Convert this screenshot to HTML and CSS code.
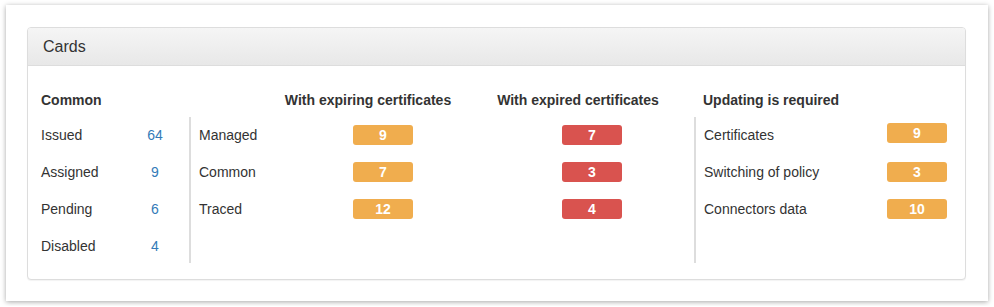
FILE: index.html
```html
<!DOCTYPE html>
<html>
    <head>
        <meta charset="UTF-8">
        <link rel="stylesheet" href="styles.css">
    </head>
    <body>
        <div class="frame">
            <div class="panel">
                <div class="panel-heading">Cards</div>
                <div class="panel-body">
                    <div class="section section-common">
                        <div class="section-head">
                            <span class="title">Common</span>
                        </div>
                        <div class="section-rows">
                            <div class="row"><span class="label">Issued</span><a class="num">64</a></div>
                            <div class="row"><span class="label">Assigned</span><a class="num">9</a></div>
                            <div class="row"><span class="label">Pending</span><a class="num">6</a></div>
                            <div class="row"><span class="label">Disabled</span><a class="num">4</a></div>
                        </div>
                    </div>
                    <div class="section section-certs">
                        <div class="section-head">
                            <span class="title title-expiring">With expiring certificates</span>
                            <span class="title title-expired">With expired certificates</span>
                        </div>
                        <div class="section-rows bordered">
                            <div class="row"><span class="label">Managed</span><span class="badge warning">9</span><span class="badge danger">7</span></div>
                            <div class="row"><span class="label">Common</span><span class="badge warning">7</span><span class="badge danger">3</span></div>
                            <div class="row"><span class="label">Traced</span><span class="badge warning">12</span><span class="badge danger">4</span></div>
                        </div>
                    </div>
                    <div class="section section-update">
                        <div class="section-head">
                            <span class="title">Updating is required</span>
                        </div>
                        <div class="section-rows bordered">
                            <div class="row"><span class="label">Certificates</span><span class="badge warning">9</span></div>
                            <div class="row"><span class="label">Switching of policy</span><span class="badge warning">3</span></div>
                            <div class="row"><span class="label">Connectors data</span><span class="badge warning">10</span></div>
                        </div>
                    </div>
                </div>
            </div>
        </div>
    </body>
</html>
```

FILE: styles.css
```css
body {
    margin: 0;
    background: #fff;
    font-family: "Liberation Sans", Arial, sans-serif;
    font-size: 14px;
    color: #333;
}
.frame {
    margin: 5px 6px;
    width: 982px;
    height: 296px;
    box-sizing: border-box;
    padding: 22px 22px 22px 21px;
    background: #fff;
    box-shadow: 0 1px 5px rgba(0, 0, 0, 0.35);
}
.panel {
    border: 1px solid #ddd;
    border-radius: 4px;
    box-shadow: 0 1px 1px rgba(0, 0, 0, 0.05);
    background: #fff;
}
.panel-heading {
    padding: 10px 15px;
    line-height: 17px;
    font-size: 16px;
    color: #333;
    background: linear-gradient(to bottom, #f5f5f5 0%, #e8e8e8 100%);
    border-bottom: 1px solid #ddd;
    border-radius: 3px 3px 0 0;
}
.panel-body {
    display: flex;
    padding: 24px 13px 16px 13px;
}
.section-head {
    display: flex;
    height: 20px;
    line-height: 20px;
    margin-bottom: 7px;
}
.title {
    font-weight: bold;
    white-space: nowrap;
}
.section-rows {
    height: 146px;
}
.bordered {
    border-left: 2px solid #ddd;
    padding-left: 8px;
}
.row {
    display: flex;
    align-items: center;
    height: 35px;
    padding-bottom: 2px;
}
.label {
    flex: none;
}
.section-common {
    width: 148px;
}
.section-common .label {
    width: 99px;
}
.num {
    width: 30px;
    text-align: center;
    color: #337ab7;
}
.section-certs {
    width: 505px;
}
.title-expiring {
    width: 200px;
    margin-left: 79px;
    text-align: center;
}
.title-expired {
    width: 200px;
    margin-left: 10px;
    text-align: center;
}
.section-certs .label {
    width: 154px;
}
.section-certs .danger {
    margin-left: 149px;
}
.section-update {
    width: 258px;
}
.section-update .title {
    padding-left: 9px;
}
.section-update .label {
    width: 183px;
}
.section-update .row:first-child .badge {
    margin-bottom: 4px;
}
.badge {
    display: inline-block;
    width: 60px;
    height: 20px;
    line-height: 20px;
    border-radius: 3px;
    text-align: center;
    font-weight: bold;
    color: #fff;
}
.warning {
    background: #f0ad4e;
}
.danger {
    background: #d9534f;
}
```
